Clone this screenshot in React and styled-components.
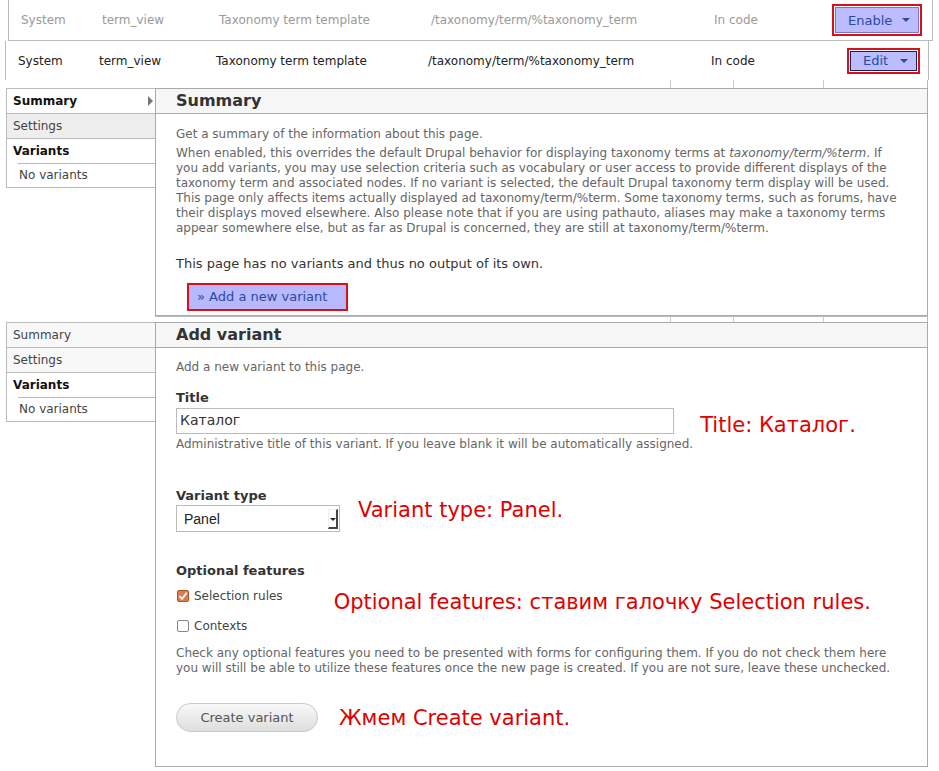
import styled, { createGlobalStyle } from 'styled-components';

const GlobalStyle = createGlobalStyle`
  html, body {
    margin: 0;
    padding: 0;
    background: #fff;
  }
  body {
    font-family: 'DejaVu Sans', 'Noto Sans', sans-serif;
    color: #333;
  }
`;

const Page = styled.div`
  width: 939px;
  height: 771px;
  overflow: hidden;
  background: #fff;
`;

const StatusRow = styled.div`
  display: flex;
  align-items: center;
  box-sizing: border-box;
  margin-left: ${p => p.$offset}px;
  width: ${p => p.$width}px;
  height: ${p => p.$height}px;
  padding-left: 12px;
  border-left: 1px solid #bbb;
  border-right: 1px solid #bbb;
  border-bottom: ${p => (p.$faded ? '1px solid #bbb' : 'none')};
  font-size: 12px;
  color: ${p => (p.$faded ? '#9a9a9a' : '#222')};
`;

const Cell = styled.div`
  flex: 0 0 ${p => p.$w}px;
  white-space: nowrap;
`;

const ActionBox = styled.div`
  margin-left: auto;
  margin-right: ${p => p.$right}px;
  border: 2px solid #d8101c;
  padding: 1px;
  display: flex;
`;

const ActionButton = styled.div`
  display: flex;
  align-items: center;
  justify-content: space-between;
  box-sizing: border-box;
  width: ${p => p.$w}px;
  height: ${p => p.$h}px;
  padding: 0 8px 0 ${p => p.$pl}px;
  background: #bcbcff;
  border: 1px solid ${p => (p.$dark ? '#202050' : '#7a7ab8')};
  color: #2a4aa0;
  font-size: 13px;
`;

const Caret = styled.span`
  width: 0;
  height: 0;
  border-left: 4px solid transparent;
  border-right: 4px solid transparent;
  border-top: 4px solid #2a4aa0;
`;

const TickStrip = styled.div`
  display: flex;
  margin-left: ${p => p.$offset}px;
  width: ${p => p.$width}px;
  height: ${p => p.$height}px;
  box-sizing: border-box;
  border-top: ${p => (p.$top ? '1px solid #bbb' : 'none')};
  border-right: 1px solid #bbb;
`;

const Tick = styled.div`
  flex: 0 0 ${p => p.$w}px;
  border-right: ${p => (p.$line ? '1px solid #ccc' : 'none')};
`;

const Section = styled.div`
  display: flex;
  margin-left: 6px;
  width: 922px;
`;

const Nav = styled.ul`
  list-style: none;
  margin: 0;
  padding: 0;
  width: 149px;
  flex: 0 0 149px;
  align-self: flex-start;
  box-sizing: border-box;
  border: 1px solid #bbb;
  border-right: none;
`;

const NavItem = styled.li`
  position: relative;
  height: ${p => (p.$sub ? 23 : 24)}px;
  line-height: ${p => (p.$sub ? 23 : 24)}px;
  padding-left: ${p => (p.$sub ? 12 : 6)}px;
  font-size: 12px;
  font-weight: ${p => (p.$bold ? 'bold' : 'normal')};
  color: ${p => (p.$active ? '#111' : '#444')};
  background: ${p => p.$bg || '#fff'};
  border-top: ${p => (p.$first || p.$sub ? 'none' : '1px solid #bbb')};
`;

const SubLine = styled.div`
  margin-left: 11px;
  border-top: 1px solid #bbb;
`;

const NavArrow = styled.span`
  position: absolute;
  right: 2px;
  top: 7px;
  width: 0;
  height: 0;
  border-top: 5px solid transparent;
  border-bottom: 5px solid transparent;
  border-left: 5px solid #777;
`;

const Panel = styled.div`
  flex: 1;
  box-sizing: border-box;
  height: ${p => p.$height}px;
  border: 1px solid #aaa;
`;

const PanelHeader = styled.h2`
  margin: 0;
  height: 24px;
  line-height: 24px;
  padding-left: 20px;
  background: #f6f6f6;
  border-bottom: 1px solid #aaa;
  font-size: 16px;
  font-weight: bold;
  color: #333;
`;

const PanelBody = styled.div`
  padding: ${p => p.$pt}px 22px 0 20px;
`;

const Description = styled.p`
  margin: ${p => p.$mt || 0}px 0 0;
  font-size: 12px;
  line-height: 15px;
  color: #666;
`;

const Lead = styled.p`
  margin: ${p => p.$mt}px 0 0;
  font-size: 13px;
  line-height: 16px;
  color: #333;
`;

const HighlightLink = styled.a`
  display: inline-block;
  margin: ${p => p.$mt}px 0 0 11px;
  box-sizing: border-box;
  width: 161px;
  height: 28px;
  padding: 4px 0 0 8px;
  border: 2px solid #d8101c;
  background: #b8b8ff;
  color: #2a4aa0;
  font-size: 13px;
  text-decoration: none;
`;

const Label = styled.div`
  margin-top: ${p => p.$mt}px;
  font-size: 13px;
  line-height: 16px;
  font-weight: bold;
  color: #333;
`;

const FieldRow = styled.div`
  display: flex;
  align-items: ${p => p.$align || 'center'};
  margin-top: ${p => p.$mt || 0}px;
`;

const TextInput = styled.div`
  box-sizing: border-box;
  width: 498px;
  height: 26px;
  padding: 3px 0 0 3px;
  border: 1px solid #bbb;
  font-size: 14px;
  color: #333;
`;

const Note = styled.span`
  margin-left: ${p => p.$ml}px;
  margin-top: ${p => p.$mt || 0}px;
  font-size: 21px;
  color: #e00000;
  white-space: nowrap;
`;

const SelectBox = styled.div`
  display: flex;
  align-items: center;
  justify-content: space-between;
  box-sizing: border-box;
  width: 164px;
  height: 27px;
  padding: 0 1px 0 7px;
  border: 1px solid #bbb;
  font-size: 14px;
  color: #222;
  font-family: 'Liberation Sans', 'DejaVu Sans', sans-serif;
`;

const SelectArrow = styled.span`
  position: relative;
  width: 10px;
  height: 20px;
  box-sizing: border-box;
  border-right: 2px solid #444;
  border-bottom: 2px solid #444;
  border-top: 1px solid #eee;
  border-left: 1px solid #eee;

  &::after {
    content: '';
    position: absolute;
    left: 1px;
    top: 8px;
    border-left: 3px solid transparent;
    border-right: 3px solid transparent;
    border-top: 3px solid #222;
  }
`;

const CheckList = styled.div`
  display: flex;
  flex-direction: column;
  gap: 14px;
  margin-top: 9px;
`;

const CheckRow = styled.label`
  display: flex;
  align-items: center;
  gap: 5px;
  font-size: 12px;
  line-height: 16px;
  color: #444;
`;

const Box = styled.span`
  display: inline-flex;
  align-items: center;
  justify-content: center;
  box-sizing: border-box;
  width: 12px;
  height: 12px;
  margin-left: 1px;
  border-radius: 2px;
  border: 1px solid ${p => (p.$checked ? '#b0532a' : '#888')};
  background: ${p => (p.$checked ? '#e27a4c' : '#fff')};
`;

const PillButton = styled.button`
  box-sizing: border-box;
  width: 142px;
  height: 29px;
  border-radius: 15px;
  border: 1px solid #c8c8c8;
  background: linear-gradient(#f8f8f8, #dedede);
  font-family: 'DejaVu Sans', sans-serif;
  font-size: 13px;
  color: #555;
  padding: 0;
`;

const Checkbox = ({ checked, children }) => (
  <CheckRow>
    <Box $checked={checked}>
      {checked && (
        <svg width="10" height="10" viewBox="0 0 10 10">
          <path d="M1.5 5.2 L4 7.8 L8.8 1.8" fill="none" stroke="#fff" strokeWidth="1.8" />
        </svg>
      )}
    </Box>
    {children}
  </CheckRow>
);

const columns = [81, 117, 212, 283];
const rowTexts = ['System', 'term_view', 'Taxonomy term template', '/taxonomy/term/%taxonomy_term'];

const TaskRow = ({ faded }) => (
  <StatusRow
    $faded={faded}
    $offset={faded ? 8 : 5}
    $width={faded ? 925 : 924}
    $height={faded ? 41 : 39}
  >
    {rowTexts.map((text, i) => (
      <Cell key={text} $w={columns[i]}>
        {text}
      </Cell>
    ))}
    <Cell $w={90}>In code</Cell>
    {faded ? (
      <ActionBox $right={10}>
        <ActionButton $w={84} $h={26} $pl={12}>
          Enable <Caret />
        </ActionButton>
      </ActionBox>
    ) : (
      <ActionBox $right={8}>
        <ActionButton $w={67} $h={20} $pl={12} $dark>
          Edit <Caret />
        </ActionButton>
      </ActionBox>
    )}
  </StatusRow>
);

const Ticks = ({ top, height }) => (
  <TickStrip $offset={155} $width={773} $height={height} $top={top}>
    <Tick $w={515} $line />
    <Tick $w={62} $line />
    <Tick $w={89} $line />
  </TickStrip>
);

const SideNav = ({ summaryActive }) => (
  <Nav>
    <NavItem $first $bold={summaryActive} $active={summaryActive} $bg={summaryActive ? '#fff' : '#f8f8f8'}>
      Summary
      {summaryActive && <NavArrow />}
    </NavItem>
    <NavItem $bg={summaryActive ? '#eee' : '#f8f8f8'}>Settings</NavItem>
    <NavItem $bold $active>
      Variants
    </NavItem>
    <SubLine />
    <NavItem $sub>No variants</NavItem>
  </Nav>
);

export default function App() {
  return (
    <Page>
      <GlobalStyle />
      <TaskRow faded />
      <TaskRow />
      <Ticks height={8} />

      <Section>
        <SideNav summaryActive />
        <Panel $height={228}>
          <PanelHeader>Summary</PanelHeader>
          <PanelBody $pt={13}>
            <Description>Get a summary of the information about this page.</Description>
            <Description $mt={4}>
              When enabled, this overrides the default Drupal behavior for displaying taxonomy terms at{' '}
              <em>taxonomy/term/%term</em>. If you add variants, you may use selection criteria such as
              vocabulary or user access to provide different displays of the taxonomy term and associated
              nodes. If no variant is selected, the default Drupal taxonomy term display will be used. This
              page only affects items actually displayed ad taxonomy/term/%term. Some taxonomy terms, such as
              forums, have their displays moved elsewhere. Also please note that if you are using pathauto,
              aliases may make a taxonomy terms appear somewhere else, but as far as Drupal is concerned, they
              are still at taxonomy/term/%term.
            </Description>
            <Lead $mt={20}>This page has no variants and thus no output of its own.</Lead>
            <HighlightLink href="#" $mt={11}>
              » Add a new variant
            </HighlightLink>
          </PanelBody>
        </Panel>
      </Section>

      <Ticks top height={6} />

      <Section>
        <SideNav />
        <Panel $height={445}>
          <PanelHeader>Add variant</PanelHeader>
          <PanelBody $pt={12}>
            <Description>Add a new variant to this page.</Description>
            <Label $mt={15}>Title</Label>
            <FieldRow $align="flex-start" $mt={2}>
              <div>
                <TextInput>Каталог</TextInput>
                <Description $mt={3}>
                  Administrative title of this variant. If you leave blank it will be automatically assigned.
                </Description>
              </div>
              <Note $ml={7} $mt={5}>
                Title: Каталог.
              </Note>
            </FieldRow>
            <Label $mt={36}>Variant type</Label>
            <FieldRow $align="flex-start" $mt={1}>
              <SelectBox>
                Panel
                <SelectArrow />
              </SelectBox>
              <Note $ml={18} $mt={-7}>
                Variant type: Panel.
              </Note>
            </FieldRow>
            <Label $mt={31}>Optional features</Label>
            <FieldRow $align="flex-start">
              <CheckList>
                <Checkbox checked>Selection rules</Checkbox>
                <Checkbox>Contexts</Checkbox>
              </CheckList>
              <Note $ml={51} $mt={11}>
                Optional features: ставим галочку Selection rules.
              </Note>
            </FieldRow>
            <Description $mt={12}>
              Check any optional features you need to be presented with forms for configuring them. If you do
              not check them here you will still be able to utilize these features once the new page is
              created. If you are not sure, leave these unchecked.
            </Description>
            <FieldRow $mt={27}>
              <PillButton>Create variant</PillButton>
              <Note $ml={21}>Жмем Create variant.</Note>
            </FieldRow>
          </PanelBody>
        </Panel>
      </Section>
    </Page>
  );
}
